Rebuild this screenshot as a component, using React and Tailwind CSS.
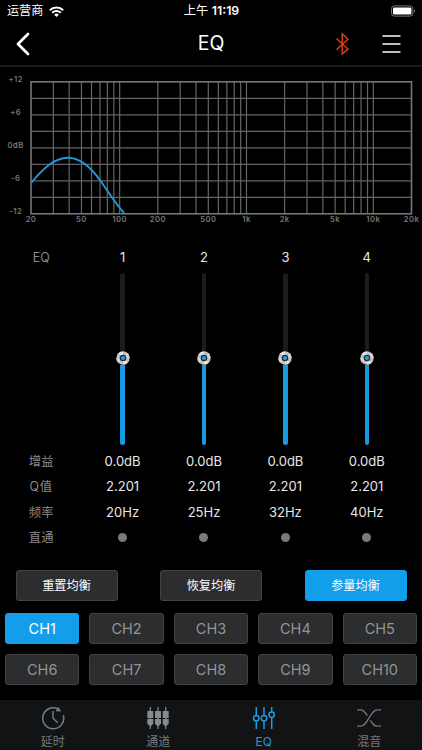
const BANDS = [
  { id: 1, gain: '0.0dB', q: '2.201', freq: '20Hz' },
  { id: 2, gain: '0.0dB', q: '2.201', freq: '25Hz' },
  { id: 3, gain: '0.0dB', q: '2.201', freq: '32Hz' },
  { id: 4, gain: '0.0dB', q: '2.201', freq: '40Hz' },
];

const CHANNELS = ['CH1', 'CH2', 'CH3', 'CH4', 'CH5', 'CH6', 'CH7', 'CH8', 'CH9', 'CH10'];

const ACTIONS = [
  { label: '重置均衡' },
  { label: '恢复均衡' },
  { label: '参量均衡', active: true },
];

const FREQ_LABELS = [
  [20, '20'], [50, '50'], [100, '100'], [200, '200'], [500, '500'],
  [1000, '1k'], [2000, '2k'], [5000, '5k'], [10000, '10k'], [20000, '20k'],
];

const GAIN_LABELS = ['+12', '+6', '0dB', '-6', '-12'];

// plot area of the response graph
const LEFT = 31;
const RIGHT = 411.5;
const TOP = 16;
const BOTTOM = 148;

const freqX = (f) => LEFT + (Math.log10(f / 20) / 3) * (RIGHT - LEFT);

const gridFreqs = [10, 100, 1000, 10000]
  .flatMap((d) => [1, 2, 3, 4, 5, 6, 7, 8, 9].map((n) => n * d))
  .filter((f) => f > 20 && f < 20000);

function StatusBar() {
  return (
    <div className="flex h-[22px] items-center justify-between pl-[7px] pr-[6px] leading-none">
      <div className="flex w-[120px] items-center gap-[6px]">
        <span className="text-[12.1px]">运营商</span>
        <svg width="15" height="11" viewBox="0 0 15 11" fill="none" stroke="#fff" strokeWidth="2">
          <path d="M0.8 4.2a9.6 9.6 0 0 1 13.4 0" />
          <path d="M3.2 6.8a6.2 6.2 0 0 1 8.6 0" />
          <path d="M7.5 11 5.2 8.7a3.3 3.3 0 0 1 4.6 0z" fill="#fff" stroke="none" />
        </svg>
      </div>
      <span className="text-[12.3px] whitespace-nowrap">
        上午 <span className="font-semibold">11:19</span>
      </span>
      <div className="flex w-[120px] justify-end">
        <svg width="26" height="12" viewBox="0 0 26 12">
          <rect x="1.5" y="0.9" width="21.4" height="10.2" rx="2.8" fill="none" stroke="#777" />
          <rect x="3" y="2.4" width="18.4" height="7.2" rx="1.4" fill="#fff" />
          <path d="M24.2 4.2c1.3.6 1.3 3 0 3.6z" fill="#777" />
        </svg>
      </div>
    </div>
  );
}

function Header() {
  return (
    <header className="flex h-[45px] items-center justify-between border-b-2 border-[#1c1c20] pr-[21px] pl-[15px]">
      <svg width="86" height="26" viewBox="0 0 86 26" fill="none" stroke="#fff" strokeWidth="2.8" strokeLinecap="round" strokeLinejoin="round">
        <path d="M13 3 3 13l10 10" />
      </svg>
      <h1 className="text-[19.5px] leading-none">EQ</h1>
      <div className="flex w-[80px] items-center justify-end gap-[32px]">
        <svg width="15" height="24" viewBox="0 0 15 24" fill="none" stroke="#d93a17" strokeWidth="1.5">
          <path d="M1.5 6.5 13 17.2 7.2 22V2L13 7.2 1.5 17.8" />
        </svg>
        <svg width="19" height="20" viewBox="0 0 19 20" stroke="#fff" strokeWidth="1.4">
          <path d="M0.5 2h18M0.5 10h18M0.5 18h18" />
        </svg>
      </div>
    </header>
  );
}

function ResponseGraph() {
  return (
    <svg className="block" width="422" height="164" viewBox="0 0 422 164">
      <g stroke="#666466" strokeWidth="1.2">
        {[1, 2, 3, 4, 5, 6, 7].map((i) => (
          <line key={i} x1={LEFT} x2={RIGHT} y1={TOP + i * 16.5 - 0.1} y2={TOP + i * 16.5 - 0.1} />
        ))}
        {gridFreqs.map((f) => (
          <line key={f} x1={freqX(f)} x2={freqX(f)} y1={TOP} y2={BOTTOM} />
        ))}
      </g>
      <rect x={LEFT} y={TOP - 0.2} width={RIGHT - LEFT} height={BOTTOM - TOP} fill="none" stroke="#777577" strokeWidth="1.6" />
      <path
        d="M31.5 116.5C44 101.5 55 91.8 68 91.8C81 91.8 91.5 102 101 115.5C109 127 116 138 124 147"
        fill="none"
        stroke="#2496da"
        strokeWidth="1.9"
      />
      <g fill="#7a787a" fontSize="7.6" fontWeight="600" letterSpacing="0.5" textAnchor="middle">
        {GAIN_LABELS.map((label, i) => (
          <text key={label} x="15.7" y={15.8 + i * 33}>{label}</text>
        ))}
        {FREQ_LABELS.map(([f, label]) => (
          <text key={label} x={freqX(f)} y="156.2">{label}</text>
        ))}
      </g>
    </svg>
  );
}

function BandSlider() {
  return (
    <div className="flex h-[172px] w-[14px] flex-col items-center">
      <div className="h-[78px] w-[4.6px] rounded-t-full bg-[#1c1c20]" />
      <svg className="shrink-0" width="14" height="14" viewBox="0 0 14 14">
        <circle cx="7" cy="7" r="6.7" fill="#c6c2c3" />
        <path d="M7 7 2.3 2.3A6.6 6.6 0 0 1 7 .4zM7 7l4.7 4.7A6.6 6.6 0 0 1 7 13.6z" fill="#e6e3e4" />
        <path d="M7 7 .4 7a6.6 6.6 0 0 0 1.9 4.7zM7 7h6.6a6.6 6.6 0 0 0-1.9-4.7z" fill="#d8d5d6" />
        <circle cx="7" cy="7" r="3.3" fill="#17303f" />
        <circle cx="7" cy="7" r="2.1" fill="#2c9ddd" />
      </svg>
      <div className="w-[4.6px] flex-1 rounded-b-full bg-[#169be3]" />
    </div>
  );
}

function Equalizer() {
  return (
    <section className="ml-[0.5px] grid h-[322px] w-[407px] grid-cols-5 pt-[15px] text-center text-[13px]">
      <div className="flex flex-col items-center text-[12.4px] text-[#8b898a]">
        <span className="h-[25px] leading-[25px]">EQ</span>
        <div className="h-[179px]" />
        <span className="h-[25.4px] leading-[25.4px]">增益</span>
        <span className="h-[25.4px] leading-[25.4px] tracking-[0.8px]">Q值</span>
        <span className="h-[25.4px] leading-[25.4px]">频率</span>
        <span className="h-[25.4px] leading-[25.4px]">直通</span>
      </div>
      {BANDS.map((band) => (
        <div key={band.id} className="flex flex-col items-center text-[#e9e7e8]">
          <span className="h-[25px] leading-[25px]">{band.id}</span>
          <div className="flex h-[179px] pt-[3px]">
            <BandSlider />
          </div>
          <span className="h-[25.4px] leading-[25.4px]">{band.gain}</span>
          <span className="h-[25.4px] leading-[25.4px]">{band.q}</span>
          <span className="h-[25.4px] leading-[25.4px]">{band.freq}</span>
          <span className="flex h-[24.4px] items-center">
            <i className="block h-[9px] w-[9px] rounded-full bg-[#7b797b]" />
          </span>
        </div>
      ))}
    </section>
  );
}

function Button({ active, className = '', children }) {
  const tone = active
    ? 'border-[#129ee9] bg-[#129ee9] text-white'
    : 'border-[#414244] bg-[#2b2d2f]';
  return (
    <button className={`flex h-[31px] items-center justify-center rounded-[3px] border pt-[2px] leading-none ${tone} ${className}`}>
      {children}
    </button>
  );
}

function TabBar() {
  return (
    <nav className="grid h-[50px] grid-cols-4 bg-[#121315] text-[12px] text-[#77797d]">
      <div className="flex flex-col items-center pt-[6px]">
        <svg width="24" height="24" viewBox="0 0 24 24" fill="none" stroke="#747b81" strokeWidth="1.5">
          <path d="M22.3 9.3A10.5 10.5 0 1 1 17 2.9" />
          <path d="M12 5v7.3l4.8 4.5" />
          <path d="M17.2.8l3 4.6-5.7-.2z" fill="#747b81" stroke="none" />
        </svg>
        <span className="mt-[4px] leading-[16px]">延时</span>
      </div>
      <div className="flex flex-col items-center pt-[6px]">
        <svg width="24" height="24" viewBox="0 0 24 24" fill="#858b91">
          {[4.3, 12, 19.7].map((x) => (
            <g key={x}>
              <rect x={x - 0.6} y="1" width="1.2" height="22" />
              <rect x={x - 3} y="5" width="6" height="7" rx="0.6" />
              <path d={`M${x - 3} 13h6v4.2l-1.8 2.5h-2.4l-1.8-2.5z`} />
            </g>
          ))}
        </svg>
        <span className="mt-[4px] leading-[16px]">通道</span>
      </div>
      <div className="flex flex-col items-center pt-[6px] text-[#209be0]">
        <svg width="24" height="24" viewBox="0 0 24 24" fill="none" stroke="#209be0" strokeWidth="1.5">
          <path d="M4.3 1v8.5M4.3 15.3V23M12 1v8.5M12 15.3V23M19.7 1v5M19.7 11.8V23" />
          <circle cx="4.3" cy="12.3" r="2.7" />
          <circle cx="12" cy="12.3" r="2.7" />
          <circle cx="19.7" cy="8.8" r="2.7" />
        </svg>
        <span className="mt-[4px] leading-[16px]">EQ</span>
      </div>
      <div className="flex flex-col items-center pt-[6px]">
        <svg width="24" height="24" viewBox="0 0 24 24" fill="none" stroke="#77797d" strokeWidth="1.3">
          <path d="M0 3.8h3.5c3.3 0 4.6 2.4 6.8 5.8M13.3 14.2c2.4 3.7 3.8 6 7.2 6H24" />
          <path d="M0 20.2h3.5c4 0 5.2-3.2 8.5-8.2s4.5-8.2 8.5-8.2H24" />
        </svg>
        <span className="mt-[4px] leading-[16px]">混音</span>
      </div>
    </nav>
  );
}

export default function App() {
  return (
    <div className="flex h-[750px] w-[422px] flex-col overflow-hidden bg-black font-['Inter','Noto_Sans_CJK_SC',sans-serif] text-white">
      <StatusBar />
      <Header />
      <div className="-mt-px">
        <ResponseGraph />
      </div>
      <div className="flex-1">
        <Equalizer />
      </div>
      <div className="flex justify-between px-[15.5px]">
        {ACTIONS.map((a) => (
          <Button key={a.label} active={a.active} className="w-[102px] text-[12.2px]">
            {a.label}
          </Button>
        ))}
      </div>
      <div className="mt-3 mb-[15px] grid grid-cols-5 gap-[10px] px-[5px] text-[14.5px] text-[#949496]">
        {CHANNELS.map((ch, i) => (
          <Button key={ch} active={i === 0}>
            {ch}
          </Button>
        ))}
      </div>
      <TabBar />
    </div>
  );
}
